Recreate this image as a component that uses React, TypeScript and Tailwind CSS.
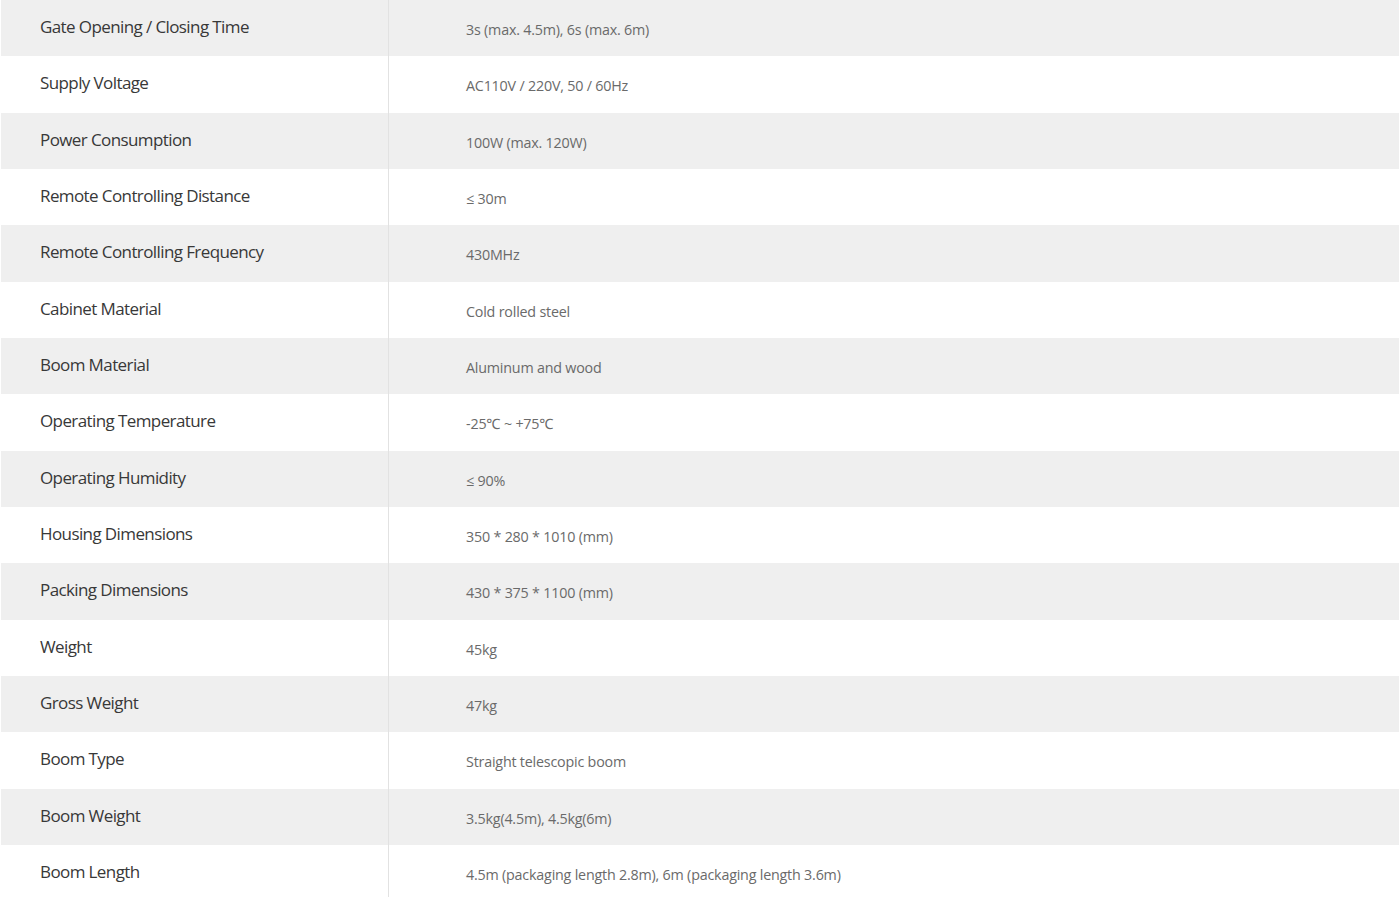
import React from 'react'

const specs: [string, string][] = [
    ['Gate Opening / Closing Time', '3s (max. 4.5m), 6s (max. 6m)'],
    ['Supply Voltage', 'AC110V / 220V, 50 / 60Hz'],
    ['Power Consumption', '100W (max. 120W)'],
    ['Remote Controlling Distance', '≤ 30m'],
    ['Remote Controlling Frequency', '430MHz'],
    ['Cabinet Material', 'Cold rolled steel'],
    ['Boom Material', 'Aluminum and wood'],
    ['Operating Temperature', '-25℃ ~ +75℃'],
    ['Operating Humidity', '≤ 90%'],
    ['Housing Dimensions', '350 * 280 * 1010 (mm)'],
    ['Packing Dimensions', '430 * 375 * 1100 (mm)'],
    ['Weight', '45kg'],
    ['Gross Weight', '47kg'],
    ['Boom Type', 'Straight telescopic boom'],
    ['Boom Weight', '3.5kg(4.5m), 4.5kg(6m)'],
    ['Boom Length', '4.5m (packaging length 2.8m), 6m (packaging length 3.6m)'],
]

const App = () => {
    return (
        <div className="w-[1400px] h-[897px] overflow-hidden bg-white pl-px pr-px" style={{ fontFamily: '"Open Sans", "Noto Sans", sans-serif' }}>
            <div className="flex flex-col w-full">
                {specs.map(([label, value], i) => (
                    <div key={label} className={'flex h-[56.35px] shrink-0 ' + (i % 2 === 0 ? 'bg-[#efefef]' : 'bg-white')}>
                        <div className="w-[388px] shrink-0 border-r border-[#e2e2e2] flex items-center pl-[39px] pb-[3px] text-[17px] tracking-[-0.6px] text-[#383838]">
                            {label}
                        </div>
                        <div className="flex-1 flex items-center pl-[77px] pt-[3px] text-[14.3px] tracking-[-0.2px] text-[#6a6a6a]">
                            {value}
                        </div>
                    </div>
                ))}
            </div>
        </div>
    )
}

export default App
